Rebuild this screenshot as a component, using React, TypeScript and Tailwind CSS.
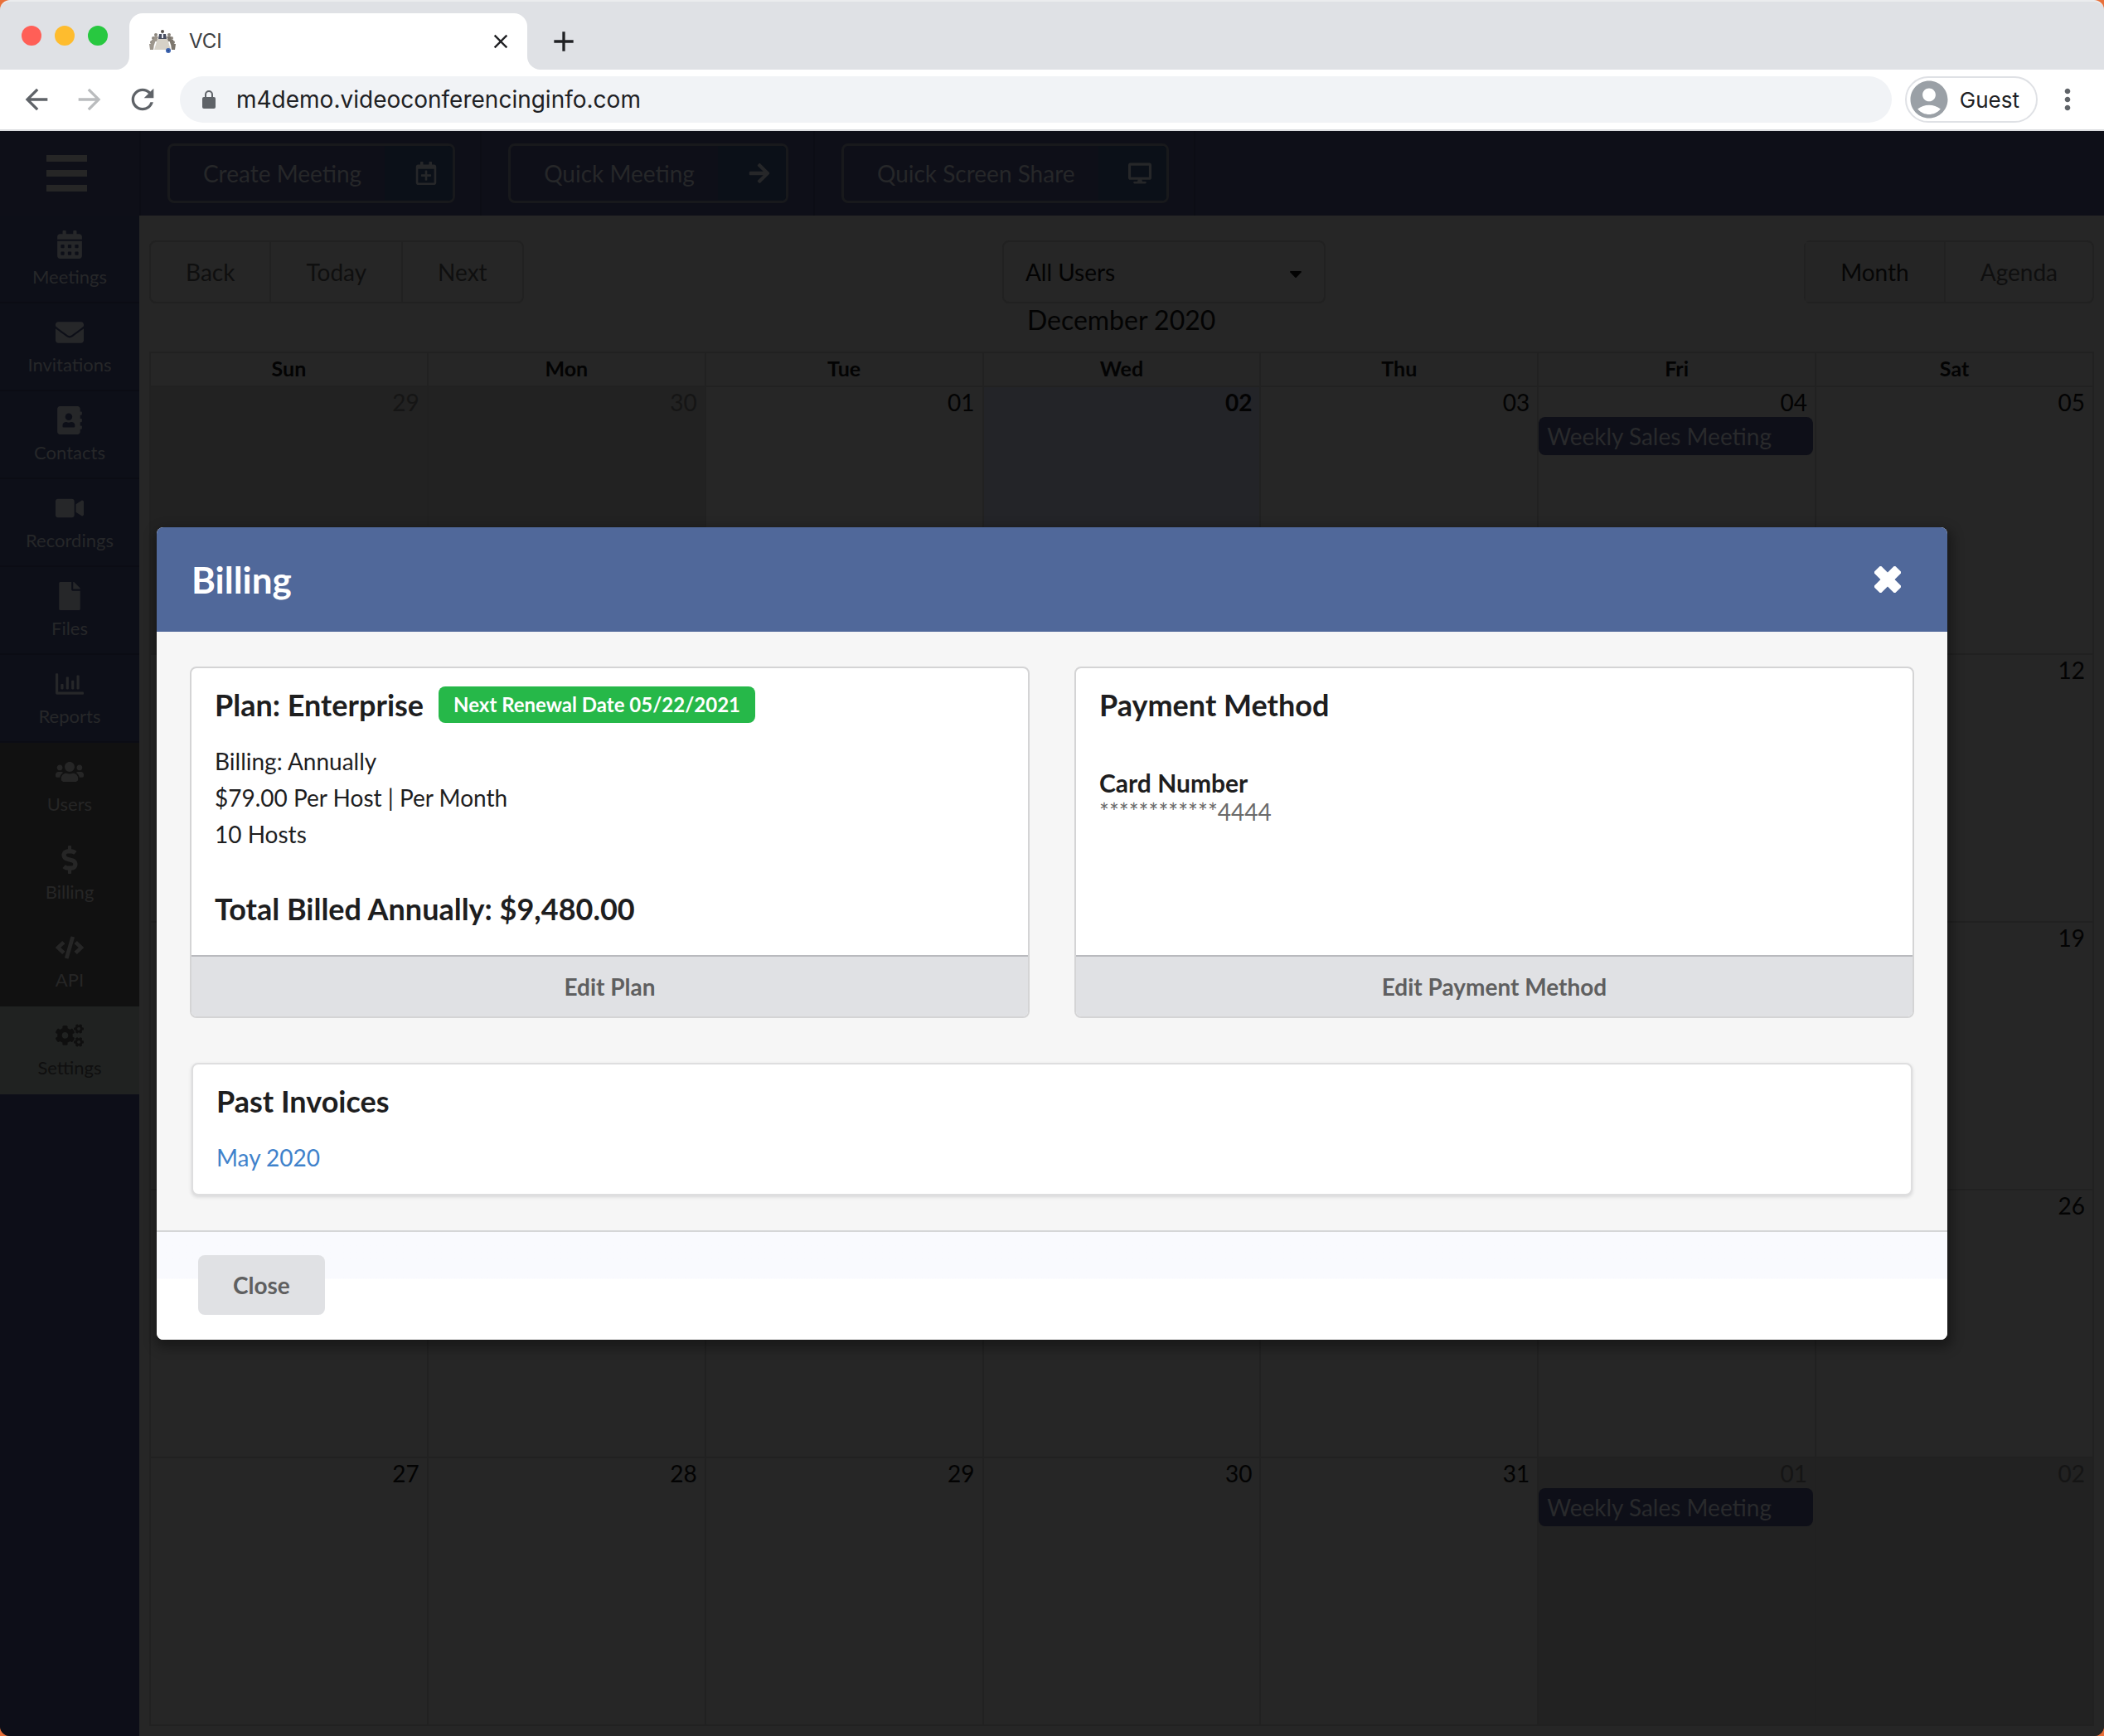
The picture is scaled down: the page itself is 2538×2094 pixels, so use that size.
import type { ReactNode } from "react"
import type { IconType } from "react-icons"
import {
  FaAddressBook,
  FaArrowRight,
  FaCalendarAlt,
  FaCaretDown,
  FaCode,
  FaCogs,
  FaDesktop,
  FaDollarSign,
  FaEnvelope,
  FaFile,
  FaRegCalendarPlus,
  FaRegChartBar,
  FaUsers,
  FaVideo,
} from "react-icons/fa"
import {
  MdAccountCircle,
  MdAdd,
  MdArrowBack,
  MdArrowForward,
  MdClose,
  MdMoreVert,
  MdRefresh,
} from "react-icons/md"
import clsx from "clsx"

interface NavItem {
  label: string
  icon: IconType
  tone: "navy" | "black" | "active"
}

const NAV: NavItem[] = [
  { label: "Meetings", icon: FaCalendarAlt, tone: "navy" },
  { label: "Invitations", icon: FaEnvelope, tone: "navy" },
  { label: "Contacts", icon: FaAddressBook, tone: "navy" },
  { label: "Recordings", icon: FaVideo, tone: "navy" },
  { label: "Files", icon: FaFile, tone: "navy" },
  { label: "Reports", icon: FaRegChartBar, tone: "navy" },
  { label: "Users", icon: FaUsers, tone: "black" },
  { label: "Billing", icon: FaDollarSign, tone: "black" },
  { label: "API", icon: FaCode, tone: "black" },
  { label: "Settings", icon: FaCogs, tone: "active" },
]

const ACTIONS = [
  { label: "Create Meeting", icon: FaRegCalendarPlus },
  { label: "Quick Meeting", icon: FaArrowRight },
  { label: "Quick Screen Share", icon: FaDesktop },
]

const WEEKDAYS = ["Sun", "Mon", "Tue", "Wed", "Thu", "Fri", "Sat"]

interface Day {
  date: string
  off?: boolean
  today?: boolean
  event?: string
}

const pad = (n: number) => String(n).padStart(2, "0")

// December 2020, padded with the neighbouring months
const DAYS: Day[] = [
  { date: "29", off: true },
  { date: "30", off: true },
  ...Array.from({ length: 31 }, (_, i) => ({
    date: pad(i + 1),
    today: i === 1,
    event: i === 3 ? "Weekly Sales Meeting" : undefined,
  })),
  { date: "01", off: true, event: "Weekly Sales Meeting" },
  { date: "02", off: true },
]

const WEEKS = [0, 1, 2, 3, 4].map((w) => DAYS.slice(w * 7, w * 7 + 7))

// People seated round a conference table
function Favicon() {
  return (
    <svg viewBox="0 0 32 32" className="size-8" aria-hidden="true">
      <path d="M10 13 H22 L26 26 H6 Z" fill="#d6d1c7" />
      <g fill="#8b857c">
        <circle cx="8" cy="8" r="2" />
        <circle cx="5" cy="12" r="2" />
        <circle cx="3" cy="17" r="2" />
        <circle cx="24" cy="8" r="2" />
        <circle cx="27" cy="12" r="2" />
        <circle cx="29" cy="17" r="2" />
      </g>
      <path d="M6 10 h5 l-2 6 h-4 Z M3 14 h5 l-2 6 h-4 Z M0 19 h6 l-1 7 h-4 Z" fill="#9d968c" />
      <path d="M26 10 h-5 l2 6 h4 Z M29 14 h-5 l2 6 h4 Z M32 19 h-6 l1 7 h4 Z" fill="#7c766d" />
      <circle cx="16" cy="4" r="2" fill="#55504c" />
      <path d="M12 7 h8 l1 6 h-10 Z" fill="#474c5e" />
      <path d="M15 6 h2 v6 h-2 Z" fill="#e8ebf3" />
      <circle cx="23" cy="27" r="3" fill="#3f66b0" />
      <circle cx="23" cy="27" r="1" fill="#23458a" />
    </svg>
  )
}

function LockIcon() {
  return (
    <svg viewBox="0 0 18 22" className="h-[22px] w-[18px]" aria-hidden="true">
      <rect x="1" y="8" width="16" height="14" rx="2" fill="currentColor" />
      <path d="M5 9 V5 a4 4 0 0 1 8 0 V9" fill="none" stroke="currentColor" strokeWidth="2" />
    </svg>
  )
}

function CrossIcon() {
  return (
    <svg viewBox="0 0 32 32" className="size-8" fill="currentColor" aria-hidden="true">
      <rect x="-2" y="10" width="36" height="12" rx="2" transform="rotate(45 16 16)" />
      <rect x="-2" y="10" width="36" height="12" rx="2" transform="rotate(-45 16 16)" />
    </svg>
  )
}

function BrowserChrome() {
  return (
    <header className="shrink-0 font-[Inter,sans-serif] text-[#202124]">
      <div className="flex h-[84px] items-end rounded-t-xl border-t-2 border-[#ebecee] bg-[#dfe1e5]">
        <div className="flex h-full w-[156px] items-center gap-4 pl-[26px]">
          <span className="size-6 rounded-full bg-[#ff5f57]" />
          <span className="size-6 rounded-full bg-[#febc2e]" />
          <span className="size-6 rounded-full bg-[#28c840]" />
        </div>
        <div className="relative flex h-[68px] w-[480px] items-center rounded-t-2xl bg-white pr-[18px] pl-6">
          <svg viewBox="0 0 16 16" className="absolute right-full bottom-0 size-4" aria-hidden="true">
            <path d="M16 0 V16 H0 A16 16 0 0 0 16 0 Z" fill="#fff" />
          </svg>
          <svg viewBox="0 0 16 16" className="absolute bottom-0 left-full size-4" aria-hidden="true">
            <path d="M0 0 V16 H16 A16 16 0 0 1 0 0 Z" fill="#fff" />
          </svg>
          <Favicon />
          <span className="ml-4 flex-1 text-2xl text-[#3c4043]">VCI</span>
          <button aria-label="Close tab">
            <MdClose className="size-7" />
          </button>
        </div>
        <button aria-label="New tab" className="flex h-[68px] items-center pl-6">
          <MdAdd className="size-10" />
        </button>
      </div>
      <div className="flex h-[74px] items-center border-b-2 border-[#dcdde0] bg-white px-6 text-[#5f6368]">
        <button aria-label="Back" className="w-16">
          <MdArrowBack className="size-10" />
        </button>
        <button aria-label="Forward" className="w-16 text-[#babcbe]">
          <MdArrowForward className="size-10" />
        </button>
        <button aria-label="Reload" className="w-[65px]">
          <MdRefresh className="size-10" />
        </button>
        <label className="flex h-14 flex-1 items-center gap-6 rounded-full bg-[#f1f3f6] pl-[26px]">
          <LockIcon />
          <input
            aria-label="Address"
            defaultValue="m4demo.videoconferencinginfo.com"
            className="flex-1 bg-transparent text-[28px] text-[#202124] outline-none"
          />
        </label>
        <button className="ml-4 flex h-14 items-center gap-[10px] rounded-full border-2 border-[#dfe1e5] pr-5 text-[26px] text-[#202124]">
          <MdAccountCircle className="size-[54px] text-[#9aa0a6]" />
          Guest
        </button>
        <button aria-label="Menu" className="ml-4">
          <MdMoreVert className="size-10" />
        </button>
      </div>
    </header>
  )
}

function TopBar() {
  return (
    <div className="flex h-[102px] shrink-0 items-stretch bg-[#0e0f18] text-[28px] text-[#262729]">
      <button
        aria-label="Toggle menu"
        className="flex w-[170px] flex-col justify-center gap-[10px] border-r-2 border-[#0c0d15] pl-14"
      >
        <span className="h-2 w-[49px] bg-[#262626]" />
        <span className="h-2 w-[49px] bg-[#262626]" />
        <span className="h-2 w-[49px] bg-[#262626]" />
      </button>
      {ACTIONS.map(({ label, icon: Icon }) => (
        <div key={label} className="flex items-center border-r-2 border-[#0c0d15] pr-[30px] pl-8">
          <button className="flex h-[72px] items-stretch overflow-hidden rounded-lg border-[3px] border-[#18191c]">
            <span className="flex items-center pr-7 pl-10">{label}</span>
            <span className="flex w-[82px] items-center justify-center bg-[#0b1018] pl-[18px]">
              <Icon className="h-7 w-auto" />
            </span>
          </button>
        </div>
      ))}
    </div>
  )
}

function Sidebar() {
  return (
    <nav className="w-[168px] shrink-0 bg-[#0d0e18]">
      {NAV.map(({ label, icon: Icon, tone }) => (
        <a
          key={label}
          href={`#${label.toLowerCase()}`}
          className={clsx(
            "flex h-[106px] flex-col items-center gap-2 border-b-2 pt-[18px] text-[22px]/[28px]",
            tone === "navy" && "border-[#0b0c14] bg-[#0d0f18] text-[#262729]",
            tone === "black" && "border-[#111111] bg-[#111111] text-[#262626]",
            tone === "active" && "border-[#202221] bg-[#202221] text-[#0f0f0f]",
          )}
        >
          <Icon className="h-[34px] w-auto" />
          {label}
        </a>
      ))}
    </nav>
  )
}

function ToolButton({ children, active }: { children: ReactNode; active?: boolean }) {
  return (
    <button
      className={clsx(
        "h-full border-r-2 border-[#212121] px-[42px] last:border-r-0",
        active ? "bg-[#252525] text-[#060606]" : "text-[#0f0f0f]",
      )}
    >
      {children}
    </button>
  )
}

function CalendarCell({ day }: { day: Day }) {
  return (
    <td
      className={clsx(
        "border-2 border-[#212121] p-0 align-top",
        day.off && "bg-[#222222] text-[#151515]",
        day.today && "bg-[#232428] font-bold",
      )}
    >
      <div className="pt-[2px] pr-[9px] pb-[2px] text-right leading-[32px]">{day.date}</div>
      {day.event && (
        <div className="mr-[2px] truncate rounded-lg bg-[#0e0f18] px-[10px] leading-[46px] text-[#292a2c]">
          {day.event}
        </div>
      )}
    </td>
  )
}

function Calendar() {
  return (
    <main className="flex flex-1 flex-col bg-[#262626] px-3 pt-[30px] pb-3 text-[28px] text-[#030303]">
      <div className="flex h-[134px] items-start justify-between">
        <div className="flex h-[76px] rounded-lg border-2 border-[#212121]">
          <ToolButton>Back</ToolButton>
          <ToolButton>Today</ToolButton>
          <ToolButton>Next</ToolButton>
        </div>
        <div>
          <div className="relative">
            <select
              aria-label="Users"
              className="h-[76px] w-[390px] appearance-none rounded-lg border-2 border-[#212121] bg-[#262626] px-[26px]"
            >
              <option>All Users</option>
            </select>
            <FaCaretDown className="pointer-events-none absolute top-7 right-6 size-6" />
          </div>
          <h1 className="pl-[30px] text-[32px]/[40px]">December 2020</h1>
        </div>
        <div className="flex h-[76px] rounded-lg border-2 border-[#212121]">
          <ToolButton active>Month</ToolButton>
          <ToolButton>Agenda</ToolButton>
        </div>
      </div>
      <table className="w-full flex-1 table-fixed border-collapse">
        <thead>
          <tr className="h-[41px]">
            {WEEKDAYS.map((name) => (
              <th key={name} className="border-2 border-[#212121] px-0 pt-0 pb-1 text-[25px]/[34px] font-bold">
                {name}
              </th>
            ))}
          </tr>
        </thead>
        <tbody>
          {WEEKS.map((week, i) => (
            <tr key={i} className="h-[323px]">
              {week.map((day, j) => (
                <CalendarCell key={j} day={day} />
              ))}
            </tr>
          ))}
        </tbody>
      </table>
    </main>
  )
}

function Card({ action, children }: { action: string; children: ReactNode }) {
  return (
    <section className="flex flex-1 flex-col overflow-hidden rounded-lg border-2 border-[#d4d4d5] bg-white">
      <div className="flex-1 px-7 pt-[22px] pb-[34px]">{children}</div>
      <button className="h-[74px] border-t-2 border-[#b9babe] bg-[#e0e1e4] font-bold text-[#5f5f60]">
        {action}
      </button>
    </section>
  )
}

function BillingModal() {
  return (
    <div
      role="dialog"
      aria-labelledby="billing-title"
      className="w-[90%] max-w-[2160px] overflow-hidden rounded-lg bg-white text-[28px] text-[#1e1e1f] shadow-[2px_6px_14px_4px_rgba(0,0,0,0.35)]"
    >
      <div className="flex h-[126px] items-center justify-between bg-[#50689a] pr-14 pl-[42px] text-white">
        <h2 id="billing-title" className="text-[44px] font-bold">
          Billing
        </h2>
        <button aria-label="Close dialog">
          <CrossIcon />
        </button>
      </div>
      <div className="border-b-2 border-[#d5d6d7] bg-[#f6f6f6] px-10 pt-[42px] pb-[42px]">
        <div className="flex gap-[54px]">
          <Card action="Edit Plan">
            <div className="flex items-center gap-[18px]">
              <h3 className="text-[36px]/[44px] font-bold">Plan: Enterprise</h3>
              <span className="rounded-lg bg-[#26b849] px-[18px] text-2xl/[44px] font-bold text-white">
                Next Renewal Date 05/22/2021
              </span>
            </div>
            <ul className="mt-6 leading-[44px]">
              <li>Billing: Annually</li>
              <li>$79.00 Per Host | Per Month</li>
              <li>10 Hosts</li>
            </ul>
            <p className="mt-[46px] text-[36px]/[44px] font-bold">
              Total Billed Annually: $9,480.00
            </p>
          </Card>
          <Card action="Edit Payment Method">
            <h3 className="text-[36px]/[44px] font-bold">Payment Method</h3>
            <h4 className="mt-[54px] text-[30px]/[36px] font-bold">Card Number</h4>
            <p className="leading-[34px] text-[#6a6a6a]">************4444</p>
          </Card>
        </div>
        <section className="mx-[2px] mt-[54px] rounded-lg border-2 border-[#dededf] bg-white px-7 pt-[22px] pb-[22px] shadow-[0_2px_4px_rgba(34,36,38,0.15)]">
          <h3 className="text-[36px]/[44px] font-bold">Past Invoices</h3>
          <a href="#invoice" className="mt-6 block leading-[44px] text-[#3f82cb]">
            May 2020
          </a>
        </section>
      </div>
      <div className="bg-linear-to-b from-[#f9fafe] from-[56px] to-white to-[57px] px-[50px] pt-7 pb-[30px]">
        <button className="h-[72px] rounded-lg bg-[#e0e1e4] px-[42px] font-bold text-[#5f5f60]">
          Close
        </button>
      </div>
    </div>
  )
}

export default function App() {
  return (
    <div className="flex min-h-screen flex-col bg-[#e8703a] font-[Lato,sans-serif]">
      <BrowserChrome />
      <div className="relative flex flex-1 flex-col overflow-hidden rounded-b-xl bg-[#262626]">
        <TopBar />
        <div className="flex flex-1">
          <Sidebar />
          <Calendar />
        </div>
        <div className="absolute inset-0 flex items-center justify-center">
          <BillingModal />
        </div>
      </div>
    </div>
  )
}
